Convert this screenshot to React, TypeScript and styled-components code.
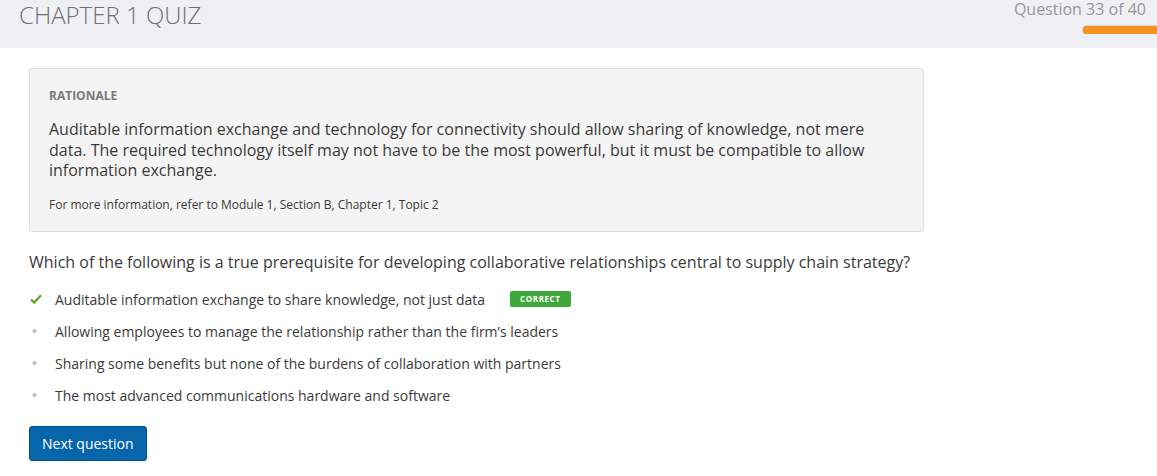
import React from "react";
import styled, { createGlobalStyle } from "styled-components";

const Global = createGlobalStyle`
  html, body { margin: 0; padding: 0; background: #ffffff; }
  body { font-family: "Open Sans", "Liberation Sans", sans-serif; color: #333; }
`;

const Header = styled.header`
  height: 48px;
  background: #eff0f4;
  display: flex;
  justify-content: space-between;
  align-items: flex-start;
  padding: 0 0 0 19px;
`;

const Title = styled.h1`
  margin: 0;
  font-size: 24px;
  font-weight: 300;
  line-height: 30px;
  color: #6f6f75;
  letter-spacing: 0;
`;

const Progress = styled.div`
  display: flex;
  flex-direction: column;
  align-items: flex-end;
`;

const Counter = styled.div`
  font-size: 16px;
  line-height: 18px;
  color: #979797;
  padding-right: 11px;
`;

const Track = styled.div`
  margin-top: 8px;
  width: 74px;
  height: 8px;
  background: #f6921e;
  border-radius: 3px 0 0 3px;
  box-shadow: -1px 0 0 #dcdce0, 0 -1px 0 #dcdce0;
`;

const Main = styled.main`
  padding: 20px 29px;
  width: 895px;
`;

const Rationale = styled.section`
  background: #f4f4f4;
  border: 1px solid #dedede;
  border-radius: 3px;
  padding: 19px 19px 18px;
  height: 164px;
  box-sizing: border-box;
`;

const Label = styled.div`
  font-size: 12px;
  font-weight: 700;
  color: #7a7a7a;
  line-height: 16px;
  margin-bottom: 15px;
`;

const Body = styled.p`
  margin: 0;
  font-size: 16px;
  line-height: 20.5px;
  color: #3a3a3a;
`;

const Note = styled.p`
  margin: 16px 0 0;
  font-size: 12px;
  line-height: 16px;
  color: #3a3a3a;
`;

const Question = styled.p`
  margin: 19px 0 16px;
  font-size: 16px;
  line-height: 22px;
  color: #3a3a3a;
`;

const Options = styled.ul`
  list-style: none;
  margin: 0;
  padding: 0;
  display: flex;
  flex-direction: column;
  gap: 12px;
`;

const Option = styled.li`
  display: flex;
  align-items: center;
  height: 20px;
  font-size: 14px;
  color: #3a3a3a;
`;

const Marker = styled.span`
  width: 25px;
  display: flex;
  align-items: center;
  padding-left: 1px;
`;

const Badge = styled.span`
  margin-left: 25px;
  background: #3ea93a;
  color: #ffffff;
  font-size: 8px;
  font-weight: 700;
  letter-spacing: 0.6px;
  line-height: 16px;
  padding: 0 10px;
  border-radius: 2px;
`;

const Button = styled.button`
  margin-top: 21px;
  background: #0766a9;
  color: #ffffff;
  border: 1px solid #05518a;
  border-radius: 3px;
  font-family: "Open Sans", "Liberation Sans", sans-serif;
  font-size: 14px;
  height: 35px;
  padding: 0 12px;
  cursor: pointer;
`;

const Check = () => (
  <svg width="12" height="10" viewBox="0 0 12 10">
    <path d="M1 5.5 L4.2 8.6 L11 1.2" fill="none" stroke="#5aa52c" strokeWidth="2.2" />
  </svg>
);

const Dot = () => (
  <svg width="12" height="10" viewBox="0 0 12 10">
    <path d="M4.5 2.5 L7 5 L4.5 7.5 L2 5 Z" fill="#b8b8b8" />
    <rect x="4" y="4.5" width="1" height="1" fill="#e8e8e8" />
  </svg>
);

const answers = [
  { text: "Auditable information exchange to share knowledge, not just data", correct: true },
  { text: "Allowing employees to manage the relationship rather than the firm\u2019s leaders", correct: false },
  { text: "Sharing some benefits but none of the burdens of collaboration with partners", correct: false },
  { text: "The most advanced communications hardware and software", correct: false },
];

export default function App() {
  return (
    <>
      <Global />
      <Header>
        <Title>CHAPTER 1 QUIZ</Title>
        <Progress>
          <Counter>Question 33 of 40</Counter>
          <Track />
        </Progress>
      </Header>
      <Main>
        <Rationale>
          <Label>RATIONALE</Label>
          <Body>
            Auditable information exchange and technology for connectivity should allow sharing of knowledge, not mere
            data. The required technology itself may not have to be the most powerful, but it must be compatible to allow
            information exchange.
          </Body>
          <Note>For more information, refer to Module 1, Section B, Chapter 1, Topic 2</Note>
        </Rationale>
        <Question>
          Which of the following is a true prerequisite for developing collaborative relationships central to supply chain strategy?
        </Question>
        <Options>
          {answers.map((a) => (
            <Option key={a.text}>
              <Marker>{a.correct ? <Check /> : <Dot />}</Marker>
              {a.text}
              {a.correct && <Badge>CORRECT</Badge>}
            </Option>
          ))}
        </Options>
        <Button>Next question</Button>
      </Main>
    </>
  );
}
